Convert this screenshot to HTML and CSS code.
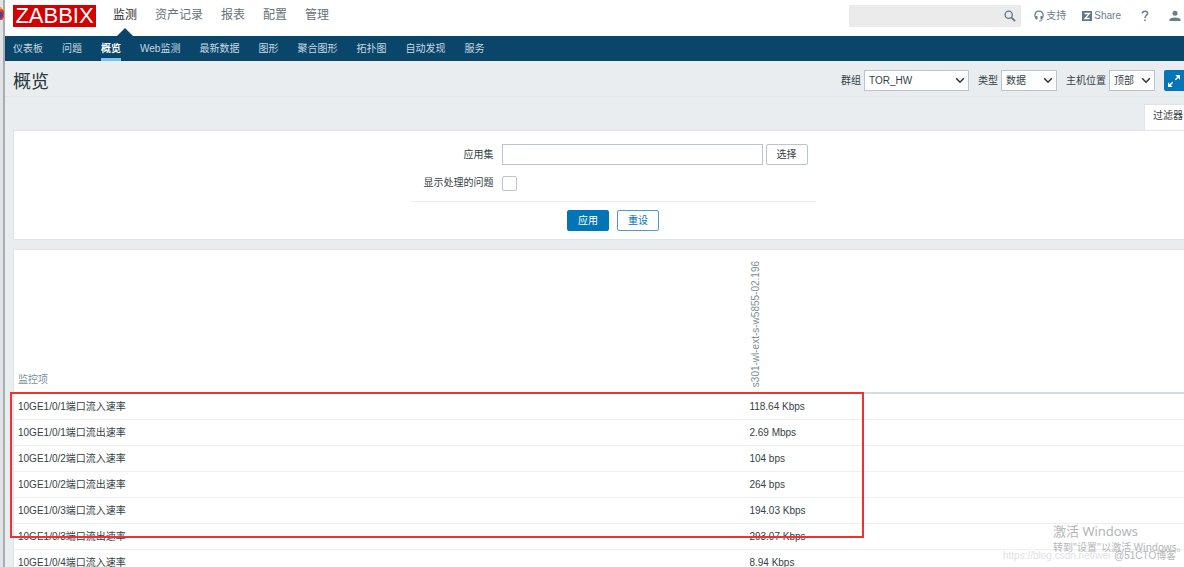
FILE: index.html
```html
<!DOCTYPE html>
<html lang="zh-CN">
<head>
<meta charset="utf-8">
<meta name="viewport" content="width=device-width, initial-scale=1">
<title>概览</title>
<link rel="stylesheet" href="styles.css">
</head>
<body>
<div class="frame">
  <div class="edge">
    <svg class="edge-icon" width="4" height="13" viewBox="0 0 4 13" aria-hidden="true"><path d="M0 0l2 2 2 2v6l-2 3H0z" fill="#e8322b"/><path d="M0 0h1l1 2-2 1z" fill="#f59a23"/><path d="M0 5h2l1 3-2 3H0z" fill="#3b4a9b"/></svg>
  </div>
  <div class="app">
    <header class="top">
      <a class="logo" href="#">ZABBIX</a>
      <nav class="main-nav">
        <a class="current" href="#">监测</a><a href="#">资产记录</a><a href="#">报表</a><a href="#">配置</a><a href="#">管理</a>
      </nav>
      <form class="search">
        <input type="text" aria-label="搜索">
        <button type="button" aria-label="搜索"><svg width="12" height="12" viewBox="0 0 12 12" fill="none" stroke="#5f7886"><circle cx="4.7" cy="4.7" r="3.6" stroke-width="1.3"/><path d="M7.3 7.3l3.8 3.8" stroke-width="1.8"/></svg></button>
      </form>
      <div class="user-links">
        <a href="#"><svg width="10" height="12" viewBox="0 0 10 12" fill="none" stroke="#68808d"><path d="M2 8.2C.2 6.500.3 1.200 5 1.200s4.800 5.300 3 7" stroke-width="1.300"/><path d="M2.600 6v3.600M7.400 6v3.600" stroke-width="1.800"/><path d="M8 9.500c0 1.200-1 1.500-2.800 1.500" stroke-width="1"/></svg>支持</a>
        <a href="#"><svg width="10" height="10" viewBox="0 0 10 10"><path fill="#5f7886" d="M0 0h10v10H0z"/><path d="M2.500 2.500h5L3 7.500h4.700" fill="none" stroke="#fff" stroke-width="1.300"/></svg>Share</a>
        <a href="#" aria-label="帮助"><svg width="8" height="12" viewBox="0 0 8 12"><path d="M1.300 3.500C1.300.500 6.600.400 6.600 3.300 6.600 5.200 4 5.200 4 8" fill="none" stroke="#68808d" stroke-width="1.500"/><path d="M3.200 9.400h1.600V11H3.200z" fill="#68808d"/></svg></a>
        <a href="#" aria-label="用户"><svg width="12" height="12" viewBox="0 0 12 12" fill="#68808d"><circle cx="6" cy="3.300" r="2.500"/><path d="M.5 11V9.500C.5 6.700 11.500 6.700 11.500 9.500V11z"/></svg></a>
      </div>
    </header>
    <nav class="sub-nav">
      <a href="#">仪表板</a><a href="#">问题</a><a class="current" href="#">概览</a><a href="#">Web监测</a><a href="#">最新数据</a><a href="#">图形</a><a href="#">聚合图形</a><a href="#">拓扑图</a><a href="#">自动发现</a><a href="#">服务</a>
    </nav>
    <div class="title-bar">
      <h1>概览</h1>
      <div class="pickers">
        <label for="group">群组</label>
        <span class="picker picker-group"><select id="group"><option>TOR_HW</option></select><svg width="10" height="7" viewBox="0 0 8 6"><path d="M.7 1L4 4.500 7.300 1"/></svg></span>
        <label for="type">类型</label>
        <span class="picker picker-type"><select id="type"><option>数据</option></select><svg width="10" height="7" viewBox="0 0 8 6"><path d="M.7 1L4 4.500 7.300 1"/></svg></span>
        <label for="location">主机位置</label>
        <span class="picker picker-location"><select id="location"><option>顶部</option></select><svg width="10" height="7" viewBox="0 0 8 6"><path d="M.7 1L4 4.500 7.300 1"/></svg></span>
        <button class="fullscreen" type="button" aria-label="全屏"><svg width="14" height="14" viewBox="0 0 14 14" fill="#fff" stroke="#fff" stroke-width="1.500"><path stroke="none" d="M8.300 1H13v4.700zM1 8.300V13h4.700z"/><path d="M8.300 5.700l3-3M2.700 11.300l3-3"/></svg></button>
      </div>
    </div>
    <main class="content">
      <div class="tab-row"><button class="filter-tab" type="button">过滤器</button></div>
      <section class="panel filter">
        <form class="filter-form">
          <div class="fields">
            <label for="application">应用集</label>
            <div class="control"><input class="text" id="application" type="text"><button class="btn btn-plain" type="button">选择</button></div>
            <label for="ack">显示处理的问题</label>
            <div class="control"><input class="check" id="ack" type="checkbox"></div>
          </div>
          <div class="actions"><button class="btn btn-primary" type="button">应用</button><button class="btn btn-outline" type="button">重设</button></div>
        </form>
      </section>
      <section class="panel">
        <table class="overview">
          <thead><tr><th class="item">监控项</th><th><span class="host">s301-wl-ext-s-w5855-02.196</span></th></tr></thead>
          <tbody>
            <tr><td>10GE1/0/1端口流入速率</td><td>118.64 Kbps</td></tr>
            <tr><td>10GE1/0/1端口流出速率</td><td>2.69 Mbps</td></tr>
            <tr><td>10GE1/0/2端口流入速率</td><td>104 bps</td></tr>
            <tr><td>10GE1/0/2端口流出速率</td><td>264 bps</td></tr>
            <tr><td>10GE1/0/3端口流入速率</td><td>194.03 Kbps</td></tr>
            <tr><td>10GE1/0/3端口流出速率</td><td>293.07 Kbps</td></tr>
            <tr><td>10GE1/0/4端口流入速率</td><td>8.94 Kbps</td></tr>
          </tbody>
        </table>
      </section>
    </main>
  </div>
</div>
<div class="highlight"></div>
<div class="activate"><div class="activate-title">激活 Windows</div><div>转到"设置"以激活 Windows。</div></div>
<div class="mark mark-url">https://blog.csdn.net/wei</div>
<div class="mark mark-site">@51CTO博客</div>
</body>
</html>
```
FILE: styles.css
```css
* { box-sizing: border-box; }
html { overflow: hidden; }
body {
  margin: 0;
  background: #e9edf0;
  color: #343f46;
  font: 10px/14px "Liberation Sans", "Noto Sans CJK SC", sans-serif;
}
a { color: inherit; text-decoration: none; }
button, input, select { font: inherit; color: inherit; margin: 0; border-radius: 0; }
svg { flex: none; display: block; }

.frame { display: flex; min-height: 100vh; }
.edge { flex: none; width: 5px; padding-top: 7px; background: #e1e4e6; border-right: 2px solid #a9adb0; }
.app { flex: 1; min-width: 0; }

.top { display: flex; align-items: center; height: 36px; padding: 0 3px 5px 8px; background: #fff; }
.logo { width: 83px; height: 22px; margin-right: 17px; background: #d40000; color: #fff; font-size: 22px; line-height: 22px; text-align: center; }
.main-nav { display: flex; gap: 18px; align-self: stretch; font-size: 12px; line-height: 30px; color: #66717a; }
.main-nav a { position: relative; }
.main-nav .current { color: #1f2c33; }
.main-nav .current::after {
  content: "";
  position: absolute;
  left: 50%;
  top: 28px;
  margin-left: -8px;
  border: 8px solid transparent;
  border-top: 0;
  border-bottom-color: #0a466a;
}
.search { display: flex; width: 172px; height: 22px; margin-left: auto; background: #ebebeb; }
.search input { flex: 1; min-width: 0; padding: 0 6px; border: 0; background: none; }
.search button { padding: 0 5px; border: 0; background: none; }
.user-links { display: flex; align-items: center; gap: 16px; margin-left: 13px; color: #68808d; }
.user-links a { display: flex; align-items: center; gap: 2px; }
.user-links a:nth-child(n+3) { margin-left: 4px; }

.sub-nav { display: flex; gap: 19px; height: 25px; padding: 0 8px; background: #0a466a; color: #c8d8e2; line-height: 25px; }
.sub-nav .current { color: #fff; font-weight: bold; border-bottom: 3px solid #7ac3f0; }

.title-bar { display: flex; align-items: center; justify-content: space-between; height: 36px; padding: 4px 0 0 8px; border-bottom: 1px solid #e1e6e9; }
h1 { margin: 0; font-size: 18px; line-height: 22px; padding-top: 2px; font-weight: normal; color: #2a353c; }
.pickers { display: flex; align-items: center; }
.pickers label { margin-right: 3px; }
.picker { position: relative; margin-right: 9px; }
.picker select { appearance: none; display: block; width: 100%; height: 21px; padding: 0 4px; border: 1px solid #b9c6cd; background: #fff; }
.picker svg { position: absolute; right: 4px; top: 7px; pointer-events: none; fill: none; stroke: #2a353c; stroke-width: 1.3; }
.picker-group { width: 105px; }
.picker-type { width: 56px; }
.picker-location { width: 46px; }
.fullscreen { display: grid; place-items: center; width: 20px; height: 21px; padding: 0; border: 0; border-radius: 2px 0 0 2px; background: #0275b8; }

.content { padding-left: 8px; }
.tab-row { display: flex; justify-content: flex-end; padding-top: 7px; }
.filter-tab { width: 40px; height: 26px; padding: 0 0 3px 8px; border: 1px solid #dfe4e7; border-width: 1px 0 0 1px; background: #fff; text-align: left; white-space: nowrap; }
.panel { border: 1px solid #dfe4e7; border-right: 0; background: #fff; }
.filter { margin-bottom: 9px; padding: 13px 0 8px 28px; }
.filter-form { width: 405px; margin: 0 auto; }
.fields { display: grid; grid-template-columns: 83px 1fr; gap: 8px; align-items: center; padding-bottom: 8px; border-bottom: 1px solid #ebeef0; }
.fields label { text-align: right; white-space: nowrap; }
.control { display: flex; align-items: center; gap: 3px; min-height: 20px; }
.text { width: 261px; height: 21px; padding: 0 4px; border: 1px solid #b9c6cd; background: #fff; }
.check { appearance: none; width: 15px; height: 15px; border: 1px solid #b9c6cd; border-radius: 2px; background: #fff; }
.btn { width: 42px; height: 21px; padding: 0; border: 1px solid #b9c6cd; border-radius: 2px; background: #fff; text-align: center; }
.btn-primary { border-color: #0275b8; background: #0275b8; color: #fff; }
.btn-outline { border-color: #4a9ccc; color: #0275b8; }
.actions { display: flex; justify-content: center; gap: 8px; padding-top: 8px; }

.overview { width: 100%; border-collapse: separate; border-spacing: 0; table-layout: fixed; }
.overview th { height: 144px; padding: 5px 4px; border-bottom: 2px solid #d5dce0; vertical-align: bottom; text-align: left; font-weight: normal; color: #7b8f9a; }
.overview .item { width: 62%; }
.overview td { height: 26px; padding: 0 4px; border-bottom: 1px solid #eef1f2; }
.overview th + th, .overview td + td { padding-left: 10px; }
.host { display: inline-block; vertical-align: bottom; writing-mode: vertical-rl; transform: rotate(180deg); white-space: nowrap; }

.highlight { position: absolute; left: 10px; top: 392px; width: 854px; height: 146px; border: 2px solid #f23030; }
.activate { position: absolute; left: 1053px; top: 522px; color: #b3b6b8; font-family: "Noto Sans", "Noto Sans CJK SC", sans-serif; white-space: nowrap; }
.activate-title { font-size: 13px; line-height: 18px; }
.mark { position: absolute; top: 549px; white-space: nowrap; }
.mark-url { left: 1003px; color: #dfe2e4; }
.mark-site { left: 1114px; color: #b3b6b8; }
```
